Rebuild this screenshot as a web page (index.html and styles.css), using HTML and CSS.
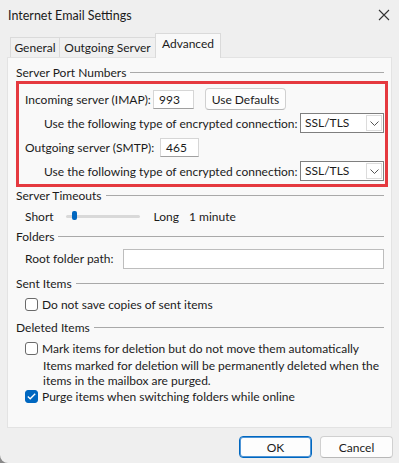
FILE: index.html
```html
<!DOCTYPE html>
<html lang="en">
<head>
    <meta charset="UTF-8">
    <title>Internet Email Settings</title>
    <link rel="stylesheet" href="styles.css">
</head>
<body>
    <div class="window">
        <div class="titlebar">
            <span class="title">Internet Email Settings</span>
            <svg class="close" width="12" height="12" viewBox="0 0 12 12">
                <path d="M1 1 L11 11 M11 1 L1 11" stroke="#333" stroke-width="1.1" fill="none"/>
            </svg>
        </div>

        <div class="tabs">
            <div class="tab">General</div>
            <div class="tab">Outgoing Server</div>
            <div class="tab active">Advanced</div>
        </div>

        <div class="panel">
            <div class="section"><span>Server Port Numbers</span><i></i></div>
            <div class="highlight">
                <div class="row">
                    <span class="label imap">Incoming server (IMAP):</span>
                    <span class="field port-in">993</span>
                    <button class="btn defaults">Use Defaults</button>
                </div>
                <div class="row sub">
                    <span class="label">Use the following type of encrypted connection:</span>
                    <span class="select">SSL/TLS<span class="drop"><svg width="9" height="5" viewBox="0 0 9 5"><path d="M0.5 0.5 L4.5 4.5 L8.5 0.5" stroke="#555" fill="none"/></svg></span></span>
                </div>
                <div class="row">
                    <span class="label smtp">Outgoing server (SMTP):</span>
                    <span class="field port-out">465</span>
                </div>
                <div class="row sub">
                    <span class="label">Use the following type of encrypted connection:</span>
                    <span class="select">SSL/TLS<span class="drop"><svg width="9" height="5" viewBox="0 0 9 5"><path d="M0.5 0.5 L4.5 4.5 L8.5 0.5" stroke="#555" fill="none"/></svg></span></span>
                </div>
            </div>

            <div class="section"><span>Server Timeouts</span><i></i></div>
            <div class="row timeout">
                <span class="label">Short</span>
                <span class="slider"><b></b></span>
                <span class="label">Long</span>
                <span class="label minute">1 minute</span>
            </div>

            <div class="section"><span>Folders</span><i></i></div>
            <div class="row root">
                <span class="label root-label">Root folder path:</span>
                <span class="field wide"></span>
            </div>

            <div class="section"><span>Sent Items</span><i></i></div>
            <div class="row check sent">
                <span class="box"></span>
                <span class="label">Do not save copies of sent items</span>
            </div>

            <div class="section"><span>Deleted Items</span><i></i></div>
            <div class="row check">
                <span class="box"></span>
                <span class="label">Mark items for deletion but do not move them automatically</span>
            </div>
            <div class="note">
                <span>Items marked for deletion will be permanently deleted when the</span>
                <span>items in the mailbox are purged.</span>
            </div>
            <div class="row check purge">
                <span class="box checked"><svg width="9" height="7" viewBox="0 0 9 7"><path d="M0.8 3.6 L3.2 5.8 L8.2 0.8" stroke="#fff" stroke-width="1.3" fill="none"/></svg></span>
                <span class="label">Purge items when switching folders while online</span>
            </div>
        </div>

        <div class="footer">
            <button class="btn ok">OK</button>
            <button class="btn cancel">Cancel</button>
        </div>
    </div>
</body>
</html>
```

FILE: styles.css
```css
body {
    margin: 0;
    background: #8a8a8a;
    font-family: Lato, 'Noto Sans', sans-serif;
    font-size: 12px;
    color: #1b1b1b;
    white-space: nowrap;
}
.window {
    width: 399px;
    height: 463px;
    background: #efefef;
    box-sizing: border-box;
    border-radius: 0 0 0 8px;
    overflow: hidden;
    display: flex;
    flex-direction: column;
}
.titlebar {
    height: 30px;
    display: flex;
    align-items: center;
    justify-content: space-between;
    padding: 0 8px 0 8px;
    font-size: 12.5px;
}
.close {
    margin-right: 1px;
}
.tabs {
    display: flex;
    align-items: flex-end;
    height: 27px;
    margin-left: 10px;
}
.tab {
    height: 20px;
    line-height: 20px;
    width: 49px;
    text-align: center;
    border: 1px solid #dadada;
    border-bottom: none;
    border-right: none;
    box-sizing: border-box;
    background: #f0f0f0;
}
.tab:nth-child(2) {
    width: 96px;
}
.tab.active {
    width: 66px;
    height: 25px;
    line-height: 19px;
    background: #f9f9f9;
    border-right: 1px solid #dadada;
    position: relative;
    top: 1px;
}
.panel {
    margin: 0 7px;
    height: 371px;
    background: #f9f9f9;
    border: 1px solid #e3e3e3;
    box-sizing: border-box;
    padding: 6px 7px 0 8px;
}
.section {
    display: flex;
    align-items: center;
    height: 17px;
}
.section i {
    flex: 1;
    height: 1px;
    background: #a9a9a9;
    margin-left: 4px;
}
.highlight {
    border: 3px solid #e5393f;
    margin: 0 -4px 0 0;
    padding: 3px 0 0 3px;
    height: 106px;
    box-sizing: border-box;
}
.row {
    display: flex;
    align-items: center;
    padding-left: 9px;
}
.highlight .row {
    padding-left: 3px;
    height: 24px;
}
.highlight .row.sub {
    padding-left: 22px;
    justify-content: space-between;
    padding-right: 1px;
}
.imap {
    width: 128px;
}
.smtp {
    width: 135px;
}
.field {
    background: #fff;
    border: 1px solid #d6d6d6;
    border-bottom-color: #a0a0a0;
    height: 19px;
    line-height: 18px;
    box-sizing: border-box;
    padding-left: 5px;
}
.port-in {
    width: 41px;
}
.port-out {
    width: 39px;
}
.btn {
    font: inherit;
    color: #1b1b1b;
    background: #fdfdfd;
    border: 1px solid #d0d0d0;
    border-bottom-color: #b8b8b8;
    border-radius: 4px;
    padding: 0;
}
.defaults {
    margin-left: 11px;
    width: 81px;
    height: 22px;
}
.select {
    position: relative;
    width: 84px;
    height: 20px;
    line-height: 18px;
    box-sizing: border-box;
    border: 1px solid #7f7f7f;
    background: #fff;
    padding-left: 4px;
}
.drop {
    position: absolute;
    right: 1px;
    top: 1px;
    width: 16px;
    height: 16px;
    box-sizing: border-box;
    border: 1px solid #dcdcdc;
    display: flex;
    align-items: center;
    justify-content: center;
}
.timeout {
    height: 24px;
}
.slider {
    position: relative;
    width: 74px;
    height: 3px;
    background: #d9d9d9;
    border-radius: 2px;
    margin: 0 14px 0 12px;
}
.slider b {
    position: absolute;
    left: 6px;
    top: -4px;
    width: 5px;
    height: 9px;
    background: #0067c0;
    border-radius: 2px;
}
.minute {
    margin-left: 10px;
}
.root {
    height: 27px;
    margin-bottom: 3px;
}
.root-label {
    width: 98px;
}
.wide {
    flex: 1;
    height: 20px;
    border-color: #bdbdbd;
    border-bottom-color: #bdbdbd;
}
.check {
    height: 24px;
}
.check.sent {
    margin-bottom: 3px;
}
.check.purge {
    margin-top: -4px;
}
.box {
    width: 13px;
    height: 13px;
    box-sizing: border-box;
    border: 1px solid #6a6a6a;
    border-radius: 3px;
    background: #fff;
    margin-right: 4px;
    display: flex;
    align-items: center;
    justify-content: center;
}
.box.checked {
    background: #0067c0;
    border-color: #0067c0;
}
.note {
    margin: -1px 0 0 27px;
    display: flex;
    flex-direction: column;
    line-height: 14.5px;
}
.footer {
    display: flex;
    justify-content: flex-end;
    gap: 8px;
    padding: 8px 6px 0 0;
}
.footer .btn {
    width: 73px;
    height: 22px;
}
.ok {
    border: 1px solid #0067c0;
    box-shadow: inset 0 0 0 1px #4f95d6;
}
```
